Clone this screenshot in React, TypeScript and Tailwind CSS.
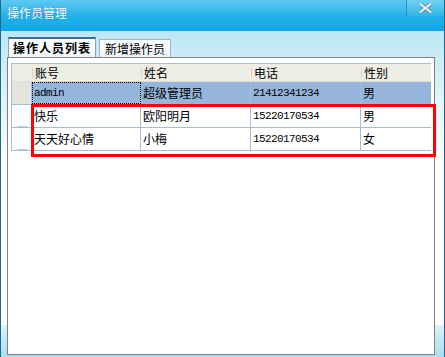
import React from "react";

const rows = [
  { a: "admin", n: "超级管理员", p: "21412341234", s: "男", sel: true },
  { a: "快乐", n: "欧阳明月", p: "15220170534", s: "男", sel: false },
  { a: "天天好心情", n: "小梅", p: "15220170534", s: "女", sel: false },
];

const cjk = { fontFamily: '"Noto Sans CJK SC", "Noto Sans", sans-serif' };
const mono = { fontFamily: '"Liberation Mono", "Noto Sans CJK SC", monospace' };

function Cell({ text, w, last, focus }: { text: string; w: string; last?: boolean; focus?: boolean }) {
  const isLatin = /^[0-9a-z]+$/.test(text);
  return (
    <div
      className={`${w} h-full flex items-center pl-[2px] ${last ? "" : "border-r border-[#a6bde2]"} ${focus ? "outline outline-1 outline-dotted outline-black -outline-offset-1" : ""}`}
    >
      <span
        className={isLatin ? "text-[11px] tracking-[-0.6px] text-black" : "text-[12px] text-black leading-none"}
        style={isLatin ? mono : cjk}
      >
        {text}
      </span>
    </div>
  );
}

function HeadCell({ text, w }: { text: string; w: string }) {
  return (
    <div className={`${w} h-full flex items-center`}>
      <div className="w-[1px] h-[10px] bg-[#d6d4ca] mr-[2px]" />
      <span className="text-[12px] text-black leading-none" style={cjk}>
        {text}
      </span>
    </div>
  );
}

export default function App() {
  return (
    <div className="w-[445px] h-[357px] relative flex flex-col border-x border-[#1d6a88] overflow-hidden bg-white" style={cjk}>
      {/* Title bar */}
      <div className="h-[31px] flex items-start bg-gradient-to-b from-[#5cc9f1] via-[#22b2ea] to-[#10a7e4] relative">
        <div className="pl-[6px] pt-[6px] text-[12px] text-white leading-[14px]" style={{ ...cjk, textShadow: "0 0 1px rgba(0,60,100,0.4)" }}>
          操作员管理
        </div>
        <div className="ml-auto w-[38px] h-[16px] border-l border-[#2a8fc0] bg-gradient-to-b from-[#6fd0f3] to-[#2cb6ea] flex items-center justify-center">
          <svg width="13" height="10" viewBox="0 0 13 10">
            <path d="M1.5 1 L11.5 9 M11.5 1 L1.5 9" stroke="#6c8c9a" strokeWidth="4" strokeLinecap="square" />
            <path d="M1.5 1 L11.5 9 M11.5 1 L1.5 9" stroke="#e6f1f4" strokeWidth="2" strokeLinecap="square" />
          </svg>
        </div>
      </div>

      {/* Body */}
      <div className="flex-1 flex flex-col bg-gradient-to-b from-[#bde7f5] via-white via-[40%] to-white relative">
        <div className="absolute left-0 right-0 bottom-0 h-[32px] bg-gradient-to-b from-[#ddf2fa] to-[#a5def3]" />
        {/* Tabs */}
        <div className="relative flex items-end pl-[7px] pt-[6px] gap-[3px] h-[26px]">
          <div className="h-[20px] w-[88px] border-t-2 border-x border-t-[#3a6ea5] border-x-[#8aa0b8] bg-gradient-to-b from-white to-[#f3f6f8] flex items-center justify-center">
            <span className="text-[12px] font-bold text-black tracking-[1px] leading-none" style={cjk}>
              操作人员列表
            </span>
          </div>
          <div className="h-[18px] w-[72px] border-t border-x border-[#9ab4d4] bg-gradient-to-b from-white to-[#eef3f7] flex items-center justify-center">
            <span className="text-[12px] text-black leading-none" style={cjk}>
              新增操作员
            </span>
          </div>
        </div>

        {/* Panel */}
        <div className="relative ml-[6px] w-[428px] flex-1 mb-[2px] border border-[#808080] bg-white pt-[5px] pl-[3px] pr-[2px]">
          <div className="w-[420px] border-l border-t border-[#a6bde2] flex flex-col">
            {/* header */}
            <div className="h-[18px] flex bg-[#eeede4] border-b border-[#e2e0d6]">
              <div className="w-[20px] h-full" />
              <HeadCell text="账号" w="w-[109px]" />
              <HeadCell text="姓名" w="w-[110px]" />
              <HeadCell text="电话" w="w-[110px]" />
              <HeadCell text="性别" w="w-[70px]" />
            </div>
            {rows.map((r, i) => (
              <div key={i} className={`h-[23px] flex border-b border-[#a6bde2] ${r.sel ? "bg-[#95b5db]" : "bg-white"}`}>
                <div className={`w-[20px] h-full border-r border-[#a6bde2] flex items-end justify-center ${r.sel ? "bg-[#e4e3dc]" : "bg-white"}`}>
                  {!r.sel && <div className="w-[10px] h-[1px] bg-[#c8c8c0]" />}
                </div>
                <Cell text={r.a} w="w-[109px]" focus={r.sel} />
                <Cell text={r.n} w="w-[110px]" />
                <Cell text={r.p} w="w-[110px]" />
                <Cell text={r.s} w="w-[70px]" last />
              </div>
            ))}
          </div>
        </div>
      </div>

      {/* Red highlight */}
      <div className="absolute left-[30px] top-[104px] w-[405px] h-[53px] border-[3px] border-[#ff0000] pointer-events-none" />
    </div>
  );
}
